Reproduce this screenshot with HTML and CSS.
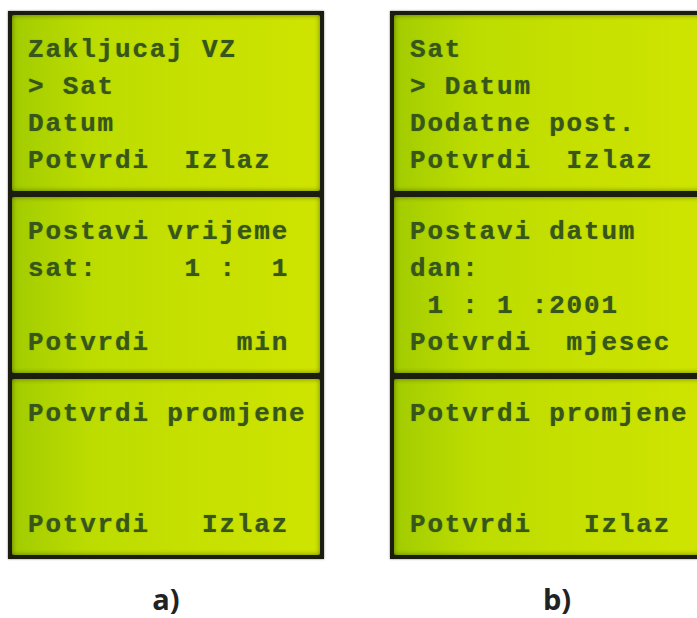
FILE: index.html
```html
<!DOCTYPE html>
<html lang="hr">
<head>
    <meta charset="UTF-8">
    <title>LCD izbornik</title>
    <link rel="stylesheet" href="styles.css">
</head>
<body>
    <div class="panels">
        <div class="column">
            <div class="lcd">
                <div class="row">Zakljucaj VZ</div>
                <div class="row">&gt; Sat</div>
                <div class="row">Datum</div>
                <div class="row">Potvrdi  Izlaz</div>
            </div>
            <div class="lcd">
                <div class="row">Postavi vrijeme</div>
                <div class="row">sat:     1 :  1</div>
                <div class="row"> </div>
                <div class="row">Potvrdi     min</div>
            </div>
            <div class="lcd">
                <div class="row">Potvrdi promjene</div>
                <div class="row"> </div>
                <div class="row"> </div>
                <div class="row">Potvrdi   Izlaz</div>
            </div>
        </div>

        <div class="column">
            <div class="lcd">
                <div class="row">Sat</div>
                <div class="row">&gt; Datum</div>
                <div class="row">Dodatne post.</div>
                <div class="row">Potvrdi  Izlaz</div>
            </div>
            <div class="lcd">
                <div class="row">Postavi datum</div>
                <div class="row">dan:</div>
                <div class="row"> 1 : 1 :2001</div>
                <div class="row">Potvrdi  mjesec</div>
            </div>
            <div class="lcd">
                <div class="row">Potvrdi promjene</div>
                <div class="row"> </div>
                <div class="row"> </div>
                <div class="row">Potvrdi   Izlaz</div>
            </div>
        </div>
    </div>

    <div class="labels">
        <div class="label">a)</div>
        <div class="label label-b">b)</div>
    </div>
</body>
</html>
```

FILE: styles.css
```css
body {
    margin: 0;
    width: 697px;
    height: 618px;
    overflow: hidden;
    background: #fff;
}
.panels {
    display: flex;
    gap: 66px;
    padding: 11px 0 0 8px;
}
.column {
    flex: none;
    width: 316px;
    box-sizing: border-box;
    padding: 4px;
    display: flex;
    flex-direction: column;
    gap: 6px;
    background: #1b1d0e;
    box-shadow: 0 0 2px rgba(0, 0, 0, 0.5);
}
.lcd {
    height: 176px;
    box-sizing: border-box;
    padding: 17px 0 0 16px;
    background: linear-gradient(90deg, #a2cc00 0%, #bcdc00 25%, #c6e000 60%, #cfe400 100%);
    box-shadow: inset 0 0 5px rgba(30, 40, 0, 0.55);
    border-radius: 2px;
}
.row {
    height: 37px;
    line-height: 37px;
    white-space: pre;
    font-family: "Liberation Mono", monospace;
    font-weight: bold;
    font-size: 26px;
    letter-spacing: 1.8px;
    color: #37561b;
    text-shadow: 0 0 1px rgba(40, 70, 10, 0.6);
}
.labels {
    display: flex;
    gap: 66px;
    padding-left: 8px;
    margin-top: 22px;
}
.label {
    flex: none;
    width: 316px;
    box-sizing: border-box;
    text-align: center;
    font-family: "Open Sans", sans-serif;
    font-weight: bold;
    font-size: 29px;
    line-height: 36px;
    color: #222;
}
.label-b {
    padding-left: 18px;
}
```
